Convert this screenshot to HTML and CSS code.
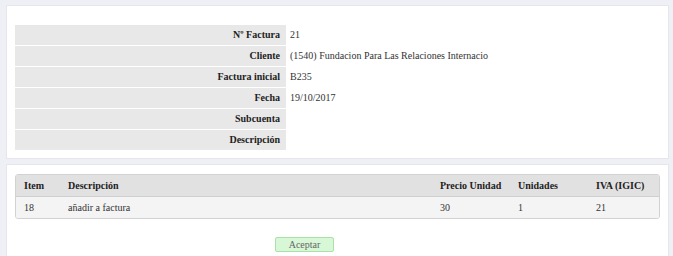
FILE: index.html
```html
<!DOCTYPE html>
<html lang="es">
<head>
    <meta charset="UTF-8">
    <title>Factura</title>
    <link rel="stylesheet" href="styles.css">
</head>
<body>
    <div class="panel panel-top">
        <table class="detail">
            <tr><th>Nº Factura</th><td>21</td></tr>
            <tr><th>Cliente</th><td>(1540) Fundacion Para Las Relaciones Internacio</td></tr>
            <tr><th>Factura inicial</th><td>B235</td></tr>
            <tr><th>Fecha</th><td>19/10/2017</td></tr>
            <tr><th>Subcuenta</th><td></td></tr>
            <tr><th>Descripción</th><td></td></tr>
        </table>
    </div>
    <div class="panel panel-bottom">
        <div class="lines">
            <div class="line line-head">
                <span class="c-item">Item</span>
                <span class="c-desc">Descripción</span>
                <span class="c-price">Precio Unidad</span>
                <span class="c-units">Unidades</span>
                <span class="c-iva">IVA (IGIC)</span>
            </div>
            <div class="line line-body">
                <span class="c-item">18</span>
                <span class="c-desc">añadir a factura</span>
                <span class="c-price">30</span>
                <span class="c-units">1</span>
                <span class="c-iva">21</span>
            </div>
        </div>
        <div class="actions">
            <button type="button" class="btn-ok">Aceptar</button>
        </div>
    </div>
</body>
</html>
```

FILE: styles.css
```css
*{
    margin: 0;
    padding: 0;
    box-sizing: border-box;
}
body{
    background: #eff0f6;
    font-family: "Liberation Serif", "Times New Roman", serif;
    font-size: 10px;
    color: #333;
    padding: 5px 4px 0 6px;
}
table, button{
    font-family: inherit;
    font-size: inherit;
}
.panel{
    background: #fff;
    border: 1px solid #e6e7ee;
}
.panel-top{
    height: 154px;
    padding: 19px 8px 0 8px;
}
.panel-bottom{
    margin-top: 5px;
    padding: 9px 8px 0 8px;
    height: 100px;
}
.detail{
    border-collapse: separate;
    border-spacing: 0 1px;
    margin-top: -1px;
}
.detail th{
    width: 271px;
    background: #e8e8e8;
    text-align: right;
    font-weight: bold;
    height: 20px;
    padding: 0 6px 1px 0;
    color: #222;
}
.detail td{
    padding: 0 4px 1px;
    height: 20px;
}
.lines{
    border: 1px solid #d2d2d2;
    border-radius: 3px;
    overflow: hidden;
}
.line{
    display: flex;
    align-items: center;
    height: 22px;
    padding-left: 8px;
}
.line-head{
    background: #e1e1e1;
    font-weight: bold;
    color: #222;
    border-bottom: 1px solid #cfcfcf;
}
.line-body{
    background: #f4f4f4;
    height: 21px;
}
.c-item{ width: 44px; }
.c-desc{ width: 372px; }
.c-price{ width: 78px; }
.c-units{ width: 78px; }
.actions{
    padding-top: 18px;
    padding-left: 260px;
}
.btn-ok{
    color: #666;
    width: 59px;
    height: 15px;
    background: #d7f7d7;
    border: 1px solid #a9e2a9;
    border-radius: 2px;
}
```
